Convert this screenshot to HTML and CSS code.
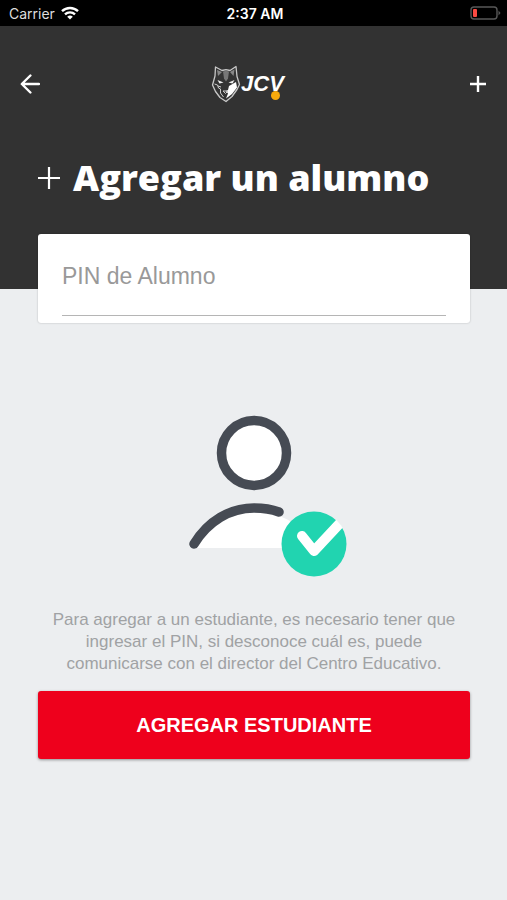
FILE: index.html
```
<!DOCTYPE html>
<html lang="es">
<head>
    <meta charset="utf-8">
    <meta name="viewport" content="width=device-width, initial-scale=1">
    <title>Agregar un alumno</title>
    <link rel="stylesheet" href="styles.css">
</head>
<body>
    <div class="status-bar">
        <div class="carrier">
            <span>Carrier</span>
            <svg width="18" height="14" viewBox="0 0 18 14" fill="none" stroke="#fff" stroke-width="2.4">
                <path d="M1 5.2a11.5 11.5 0 0 1 16 0"/>
                <path d="M4 8.4a7.2 7.2 0 0 1 10 0"/>
                <path d="M9 13.6L6.2 10.8a4 4 0 0 1 5.6 0z" fill="#fff" stroke="none"/>
            </svg>
        </div>
        <span class="time">2:37 AM</span>
        <svg class="battery" width="31" height="14" viewBox="0 0 31 14">
            <rect x="1" y="1" width="26" height="12" rx="3" fill="none" stroke="#585858" stroke-width="1.4"/>
            <path d="M28.5 4.5v5l2-2.5z" fill="#585858"/>
            <rect x="3" y="3" width="4" height="8" rx="1" fill="#fb4a42"/>
        </svg>
    </div>

    <header class="header">
        <nav class="toolbar">
            <button class="icon-btn" type="button" aria-label="Volver">
                <svg width="20" height="20" viewBox="0 0 20 20" fill="none" stroke="#fff" stroke-width="2.4" stroke-linecap="round" stroke-linejoin="round">
                    <path d="M10.4 1.5L1.8 10l8.6 8.5M2 10h17"/>
                </svg>
            </button>
            <div class="logo">
                <svg width="30" height="38" viewBox="0 0 30 38">
                    <path d="M4.5 2L11 5.5l4-.8 4 .8L25 1.5l1 10 2.5 8-2.5 5-5 7-6 5-6-4-4.5-6L1.5 20 4 11z" fill="#343434" stroke="#c8c8c8" stroke-width="1.3" stroke-linejoin="round"/>
                    <path d="M6 5l1 6 4-4zM23.5 4.5L19 7l3.5 4z" fill="#888"/>
                    <path d="M12 6.5l3-.8 3 .8-1 7-2 3-2-3z" fill="#777"/>
                    <path d="M6.5 15l6 2.5-4 1zM23.5 15l-6 2.5 4 1z" fill="#eee"/>
                    <path d="M25 17l-7 4-1 4-2 1 2 2.5-2 5 6-4.5 5-6.5z" fill="#fff"/>
                    <path d="M3.5 19l3 1 1 3 2 1 0 4 3 4M7 21l3 1M12 26h5l-2.5 2.5z" fill="none" stroke="#ccc"/>
                </svg>
                <span class="logo-text">JCV</span>
                <span class="logo-dot"></span>
            </div>
            <button class="icon-btn" type="button" aria-label="Agregar">
                <svg width="18" height="18" viewBox="0 0 18 18" stroke="#fff" stroke-width="2.4">
                    <path d="M9 1v16M1 9h16"/>
                </svg>
            </button>
        </nav>
        <h1 class="title">
            <svg width="22" height="22" viewBox="0 0 22 22" stroke="#fff" stroke-width="2.2">
                <path d="M11 0v22M0 11h22"/>
            </svg>
            Agregar un alumno
        </h1>
    </header>

    <main class="content">
        <div class="card">
            <input class="pin" type="text" placeholder="PIN de Alumno" aria-label="PIN de Alumno">
        </div>

        <svg class="student" width="160" height="162" viewBox="0 0 160 162">
            <clipPath id="badge">
                <circle cx="126" cy="129" r="33"/>
            </clipPath>
            <circle cx="66" cy="38" r="32.5" fill="#fff" stroke="#464b54" stroke-width="9.5"/>
            <path d="M6 133C20 110 43 97 66 97c20 0 36 6 50 20v16z" fill="#fff"/>
            <path d="M6 129C20 106 42 93 66 93c9 0 17 1 25 4" fill="none" stroke="#464b54" stroke-width="9.5" stroke-linecap="round"/>
            <circle cx="126" cy="129" r="32.5" fill="#21d4b0"/>
            <path d="M114 121l12 15 28-30" fill="none" stroke="#fff" stroke-width="10" stroke-linecap="round" stroke-linejoin="round" clip-path="url(#badge)"/>
        </svg>

        <p class="help">Para agregar a un estudiante, es necesario tener que ingresar el PIN, si desconoce cuál es, puede comunicarse con el director del Centro Educativo.</p>
        <button class="submit-btn" type="button">AGREGAR ESTUDIANTE</button>
    </main>
</body>
</html>
```
FILE: styles.css
```
* {
    box-sizing: border-box;
}

body {
    margin: 0;
    background-color: #eceef0;
    font-family: "Liberation Sans", Arial, sans-serif;
}

svg {
    display: block;
    flex-shrink: 0;
}

.status-bar {
    display: grid;
    grid-template-columns: 1fr auto 1fr;
    align-items: center;
    height: 26px;
    padding: 0 6px 0 9px;
    background-color: #000;
    color: #fff;
    font-family: Inter, sans-serif;
    font-size: 14px;
}

.carrier {
    display: flex;
    align-items: center;
    gap: 6px;
    color: #ddd;
}

.time {
    font-weight: 600;
}

.battery {
    justify-self: end;
}

.header {
    height: 263px;
    padding: 36px 18px 0;
    background-color: #323232;
    color: #fff;
}

.toolbar {
    display: flex;
    align-items: center;
    justify-content: space-between;
    height: 44px;
}

.icon-btn {
    display: flex;
    align-items: center;
    justify-content: center;
    padding: 0 2px;
    border: none;
    background: none;
    cursor: pointer;
}

.logo {
    position: relative;
    display: flex;
    align-items: center;
    padding-right: 14px;
}

.logo-text {
    font-family: "Liberation Sans Narrow", "Liberation Sans", sans-serif;
    font-size: 22px;
    font-style: italic;
    font-weight: bold;
    line-height: 36px;
}

.logo-dot {
    position: absolute;
    right: 18px;
    bottom: 3px;
    width: 9px;
    height: 9px;
    border-radius: 50%;
    background-color: #f7a90c;
}

.title {
    display: flex;
    align-items: center;
    gap: 13px;
    margin: 50px 0 0;
    padding-left: 20px;
    font-family: "Open Sans", sans-serif;
    font-size: 36px;
    font-weight: 800;
    line-height: 44px;
    white-space: nowrap;
}

.content {
    display: flex;
    flex-direction: column;
    align-items: center;
    margin-top: -55px;
    padding: 0 37px 32px 38px;
}

.card {
    width: 100%;
    padding: 4px 24px 7px;
    border-radius: 3px;
    background-color: #fff;
    box-shadow: 0 0 2px rgba(0, 0, 0, 0.25);
}

.pin {
    display: block;
    width: 100%;
    height: 78px;
    padding: 0;
    border: none;
    border-bottom: 1px solid #b5b5b5;
    outline: none;
    background: none;
    font-family: inherit;
    font-size: 23px;
}

.pin::placeholder {
    color: #999;
    opacity: 1;
}

.student {
    margin: 92px 0 0 28px;
}

.help {
    margin: 32px 0 16px;
    color: #a0a2a4;
    font-size: 17px;
    line-height: 22px;
    text-align: center;
}

.submit-btn {
    width: 100%;
    height: 68px;
    border: none;
    border-radius: 3px;
    background-color: #ee001c;
    box-shadow: 0 1px 3px rgba(0, 0, 0, 0.4);
    color: #fff;
    font-family: inherit;
    font-size: 20px;
    font-weight: bold;
    cursor: pointer;
}
```
